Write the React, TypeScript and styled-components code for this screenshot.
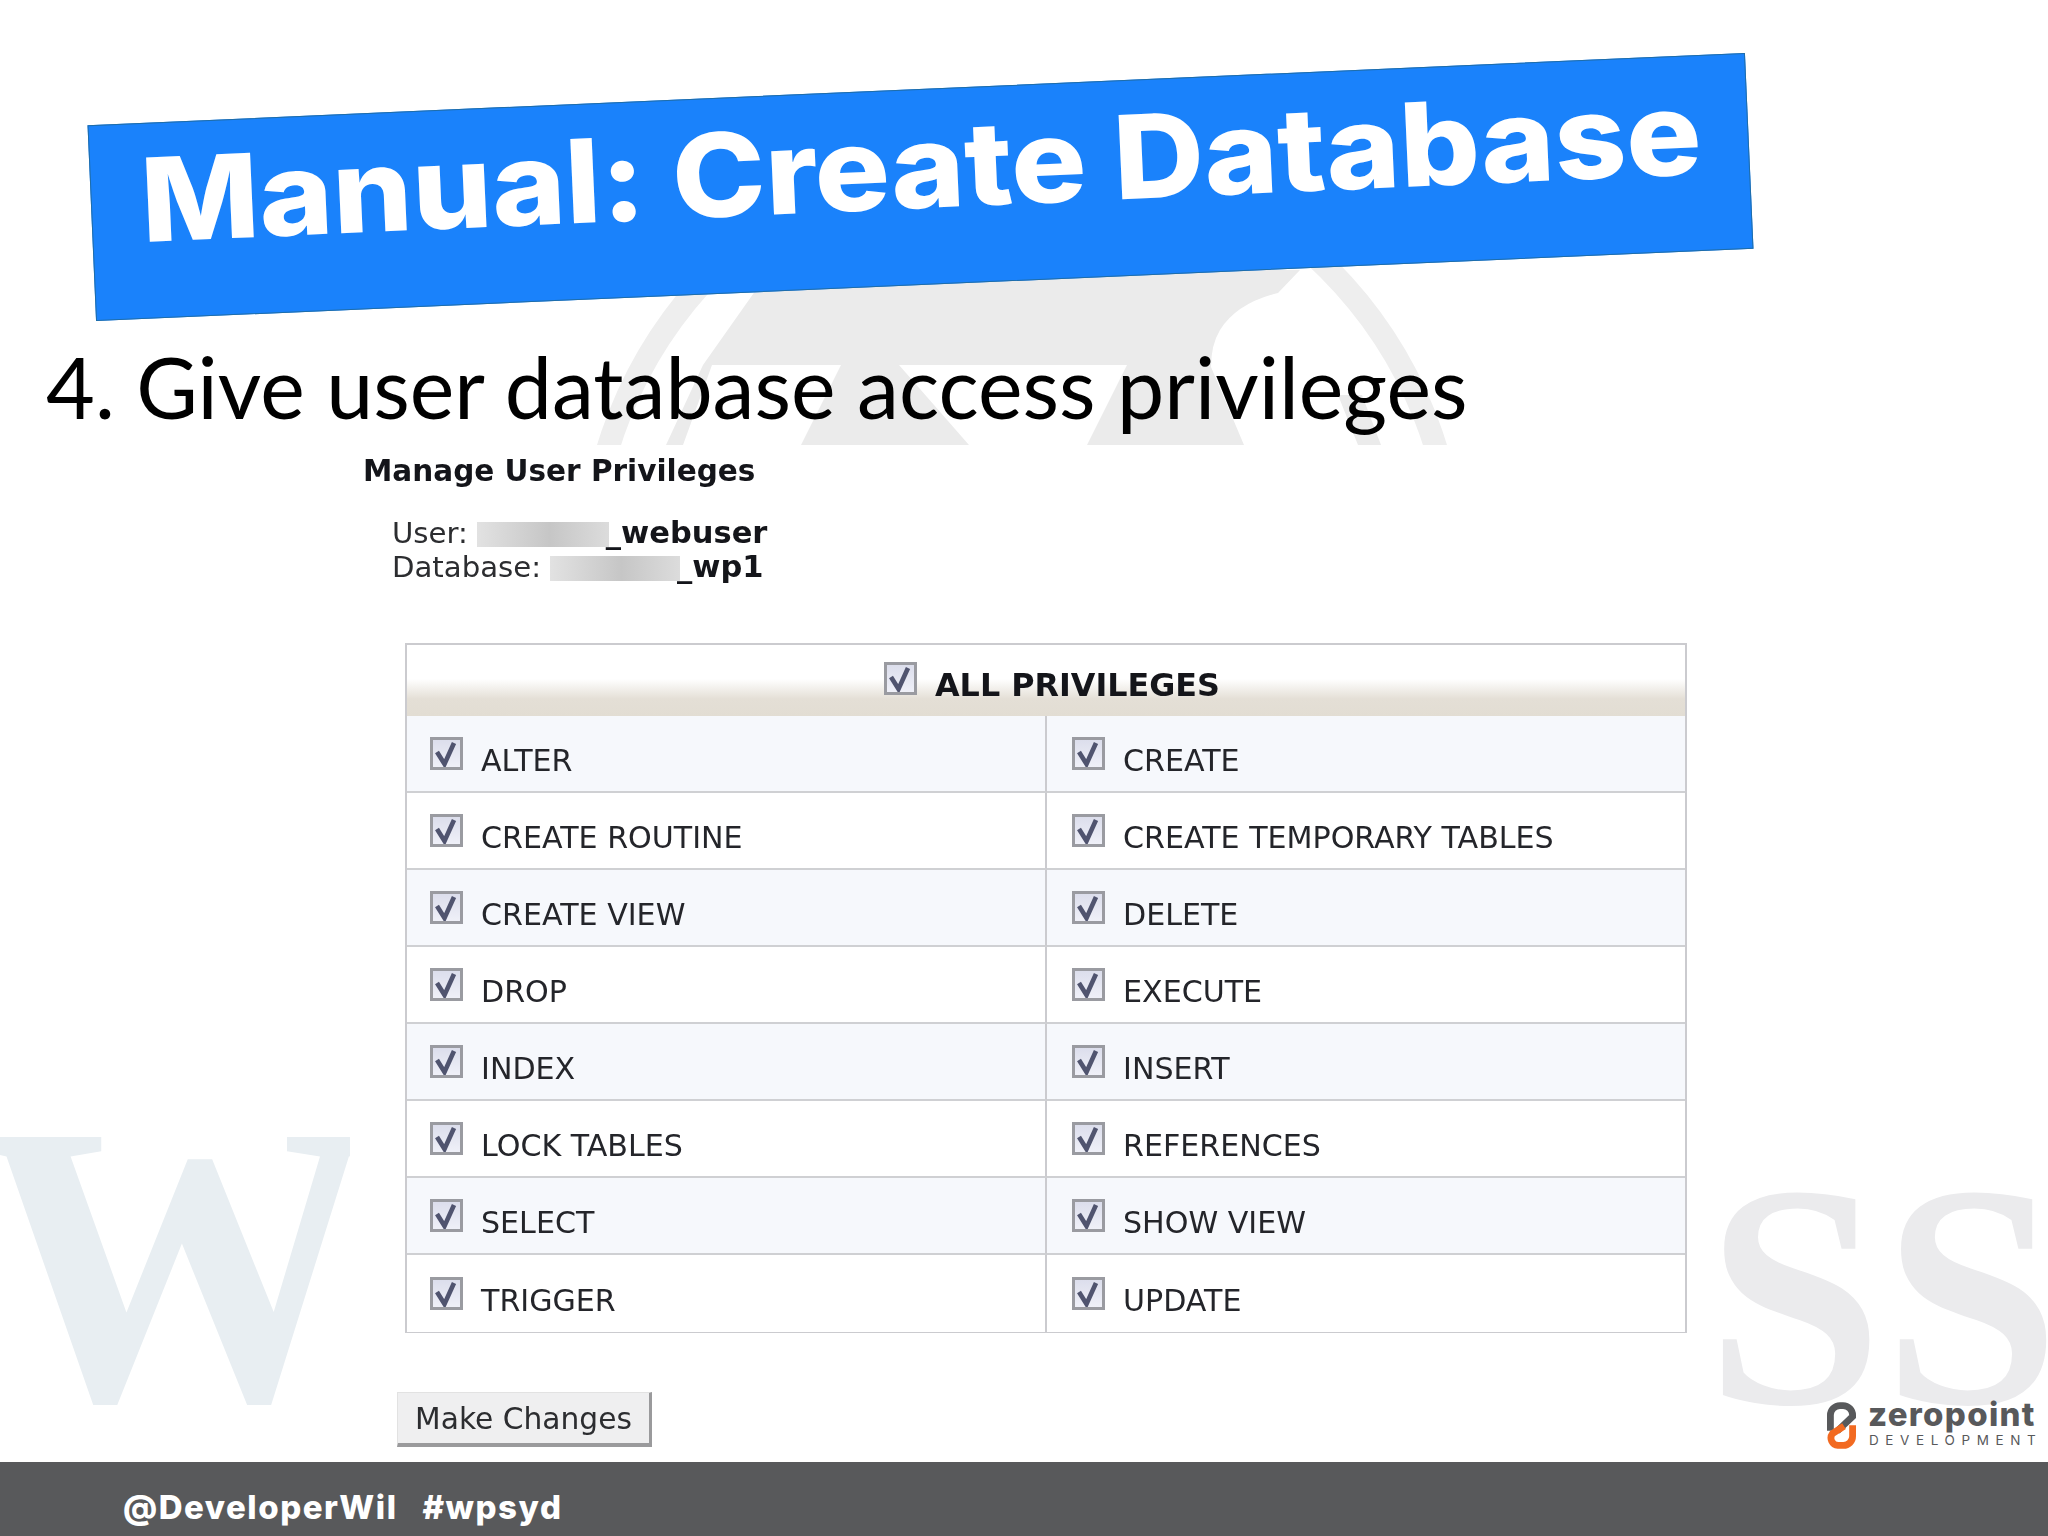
import React from "react";
import styled, { createGlobalStyle } from "styled-components";

const Global = createGlobalStyle`
  html, body { margin: 0; padding: 0; background: #fff; }
  #root { width: 2048px; height: 1536px; }
`;

const Slide = styled.div`
  position: relative;
  width: 2048px;
  height: 1536px;
  overflow: hidden;
  background: #fff;
  display: flex;
  flex-direction: column;
`;

const WatermarkW = styled.div`
  position: absolute;
  left: -22px;
  top: 1045px;
  font: 700 400px/440px "Liberation Serif", serif;
  color: #e8eef2;
`;

const WatermarkS = styled.div`
  position: absolute;
  left: 1706px;
  top: 1116px;
  font: 700 318px/360px "Liberation Serif", serif;
  color: #ebebed;
`;

const WatermarkLogo = styled.svg`
  position: absolute;
  left: 500px;
  top: 200px;
`;

const Banner = styled.div`
  position: relative;
  z-index: 2;
  flex: none;
  box-sizing: border-box;
  width: 1659px;
  height: 196px;
  margin: 89px 0 0 91px;
  padding: 21px 0 0 49px;
  background: #1a82fb;
  border: 1px solid #1f6da8;
  transform: rotate(-2.5deg);
  color: #fff;
  font: 800 116px/110px "Inter", sans-serif;
  white-space: nowrap;
`;

const BannerTitle = styled.span`
  display: inline-block;
  transform: scaleX(1.08);
  transform-origin: left center;
`;

const Subtitle = styled.div`
  position: relative;
  z-index: 2;
  flex: none;
  margin: 52px 0 0 46px;
  height: 108px;
  font: 400 84.3px/100px "Lato", sans-serif;
  color: #000;
  white-space: nowrap;
`;

const Shot = styled.div`
  position: relative;
  z-index: 1;
  box-sizing: border-box;
  flex: none;
  width: 1350px;
  height: 1017px;
  margin-left: 350px;
  padding-top: 9px;
  background: #fff;
  font-family: "DejaVu Sans", sans-serif;
  color: #2c2d30;
  filter: blur(0.7px);
`;

const Heading = styled.div`
  margin-left: 13px;
  font-size: 29.5px;
  line-height: 34px;
  font-weight: 700;
  color: #14151a;
`;

const Info = styled.div`
  margin: 28px 0 0 42px;
  font-size: 29.2px;
  line-height: 34px;
`;

const InfoLine = styled.div`
  display: flex;
  align-items: center;
  height: 34px;
`;

const Masked = styled.span<{ $w: number }>`
  display: inline-block;
  width: ${(p) => p.$w}px;
  height: 25px;
  margin: 2px 0 0 9px;
  background: linear-gradient(90deg, #e2e2e2, #c6c6c6 55%, #dcdcdc);
`;

const BoldName = styled.span`
  font-size: 30.5px;
  font-weight: 700;
  margin-left: -3px;
  color: #14151a;
`;

const Table = styled.div`
  box-sizing: border-box;
  width: 1282px;
  height: 690px;
  margin: 59px 0 0 55px;
  border: 2px solid #cbcbcf;
  display: flex;
  flex-direction: column;
`;

const HeaderRow = styled.div`
  box-sizing: border-box;
  height: 71px;
  flex: none;
  display: flex;
  justify-content: center;
  gap: 18px;
  padding: 17px 0 0 12px;
  background: linear-gradient(180deg, #fff 0, #fff 34px, #e4dfd6 54px, #e2ddd3 100%);
`;

const HeaderLabel = styled.span`
  margin-top: 6px;
  font-size: 31.8px;
  line-height: 33px;
  font-weight: 700;
  color: #14151a;
`;

const Grid = styled.div`
  flex: 1;
  display: grid;
  grid-template-columns: 640px 1fr;
  grid-auto-rows: 77px;
`;

const Cell = styled.div<{ $tint: boolean; $first: boolean; $last: boolean }>`
  box-sizing: border-box;
  display: flex;
  align-items: center;
  gap: 18px;
  padding-left: ${(p) => (p.$first ? 23 : 25)}px;
  background: ${(p) => (p.$tint ? "#f6f8fc" : "#fff")};
  border-bottom: ${(p) => (p.$last ? "none" : "2px solid #cfd0d3")};
  border-right: ${(p) => (p.$first ? "2px solid #cbcbcf" : "none")};
`;

const CellLabel = styled.span`
  padding-top: 13px;
  font-size: 30.1px;
  line-height: 33px;
  color: #24252a;
`;

const Box = styled.span`
  box-sizing: border-box;
  flex: none;
  width: 33px;
  height: 33px;
  display: inline-flex;
  border: 3px solid #9a9ba1;
  background: linear-gradient(180deg, #dcdeec, #eff0f8);
`;

const MakeChanges = styled.div`
  box-sizing: border-box;
  width: 255px;
  height: 55px;
  margin: 59px 0 0 47px;
  display: flex;
  align-items: center;
  justify-content: center;
  background: #efeff0;
  border-top: 1px solid #e2e2e2;
  border-left: 1px solid #e2e2e2;
  border-right: 3px solid #9a9a9c;
  border-bottom: 4px solid #9a9a9c;
  font-size: 29.7px;
  color: #2c2d30;
`;

const Footer = styled.div`
  position: relative;
  z-index: 2;
  flex: 1;
  box-sizing: border-box;
  background: #58595b;
  display: flex;
  align-items: center;
  gap: 25px;
  padding: 16px 0 0 123px;
  color: #fff;
  font: 800 33px/40px "Inter", sans-serif;
  letter-spacing: 1.5px;
  white-space: nowrap;
`;

const Brand = styled.div`
  position: absolute;
  z-index: 3;
  left: 1827px;
  top: 1396px;
  display: flex;
  gap: 12px;
  color: #58595b;
  font-family: "Inter", sans-serif;
`;

const BrandText = styled.div`
  display: flex;
  flex-direction: column;
`;

const BrandName = styled.span`
  font-size: 33px;
  line-height: 36px;
  font-weight: 800;
  letter-spacing: 1.3px;
`;

const BrandSub = styled.span`
  font-size: 13.5px;
  line-height: 16px;
  font-weight: 400;
  letter-spacing: 6.6px;
  margin-left: 1px;
  white-space: nowrap;
`;

const BrandMark = styled.svg`
  margin-top: 6px;
  flex: none;
`;

const Check = () => (
  <svg width="27" height="27" viewBox="0 0 27 27" aria-hidden="true">
    <path d="M4 12 L11.5 24 L21 3" fill="none" stroke="#50546f" strokeWidth="4.6" />
  </svg>
);

const rows: [string, string][] = [
  ["ALTER", "CREATE"],
  ["CREATE ROUTINE", "CREATE TEMPORARY TABLES"],
  ["CREATE VIEW", "DELETE"],
  ["DROP", "EXECUTE"],
  ["INDEX", "INSERT"],
  ["LOCK TABLES", "REFERENCES"],
  ["SELECT", "SHOW VIEW"],
  ["TRIGGER", "UPDATE"],
];

export default function App() {
  return (
    <Slide>
      <Global />
      <WatermarkLogo width="1000" height="250" viewBox="500 200 1000 250" aria-hidden="true">
        <circle cx="1022" cy="575" r="433" fill="none" stroke="#eeeeee" strokeWidth="23" />
        <path
          d="M770 270 L1300 270 L1278 293 Q1237 303 1220 330 Q1211 345 1211 367 L1244 445 L1087 445 L1127 365 L899 365 L969 445 L801 445 L841 365 L712 365 L683 445 L666 445 L703 365 Z"
          fill="#ebebeb"
        />
        <path d="M1338 395 L1362 395 L1381 445 L1358 445 Z" fill="#ebebeb" />
      </WatermarkLogo>
      <WatermarkW>W</WatermarkW>
      <WatermarkS>SS</WatermarkS>
      <Banner>
        <BannerTitle>Manual: Create Database</BannerTitle>
      </Banner>
      <Subtitle>4. Give user database access privileges</Subtitle>
      <Shot>
        <Heading>Manage User Privileges</Heading>
        <Info>
          <InfoLine>
            User:<Masked $w={132} />
            <BoldName>_webuser</BoldName>
          </InfoLine>
          <InfoLine>
            Database:<Masked $w={130} />
            <BoldName>_wp1</BoldName>
          </InfoLine>
        </Info>
        <Table>
          <HeaderRow>
            <Box>
              <Check />
            </Box>
            <HeaderLabel>ALL PRIVILEGES</HeaderLabel>
          </HeaderRow>
          <Grid>
            {rows.map(([a, b], i) => (
              <React.Fragment key={a}>
                <Cell $tint={i % 2 === 0} $first $last={i === rows.length - 1}>
                  <Box>
                    <Check />
                  </Box>
                  <CellLabel>{a}</CellLabel>
                </Cell>
                <Cell $tint={i % 2 === 0} $first={false} $last={i === rows.length - 1}>
                  <Box>
                    <Check />
                  </Box>
                  <CellLabel>{b}</CellLabel>
                </Cell>
              </React.Fragment>
            ))}
          </Grid>
        </Table>
        <MakeChanges>Make Changes</MakeChanges>
      </Shot>
      <Footer>
        <span>@DeveloperWil</span>
        <span>#wpsyd</span>
      </Footer>
      <Brand>
        <BrandMark width="29" height="47" viewBox="0 0 85 137" aria-hidden="true">
          <path
            d="M10 84 V38 A28 28 0 0 1 38 10 H47 A28 28 0 0 1 75 38 V42 L30 85"
            fill="none"
            stroke="#58595b"
            strokeWidth="20"
          />
          <path
            d="M75 68 V100 A27 27 0 0 1 48 127 H32 A22 22 0 0 1 16 92 L50 70"
            fill="none"
            stroke="#f26a21"
            strokeWidth="20"
          />
        </BrandMark>
        <BrandText>
          <BrandName>zeropoint</BrandName>
          <BrandSub>DEVELOPMENT</BrandSub>
        </BrandText>
      </Brand>
    </Slide>
  );
}
